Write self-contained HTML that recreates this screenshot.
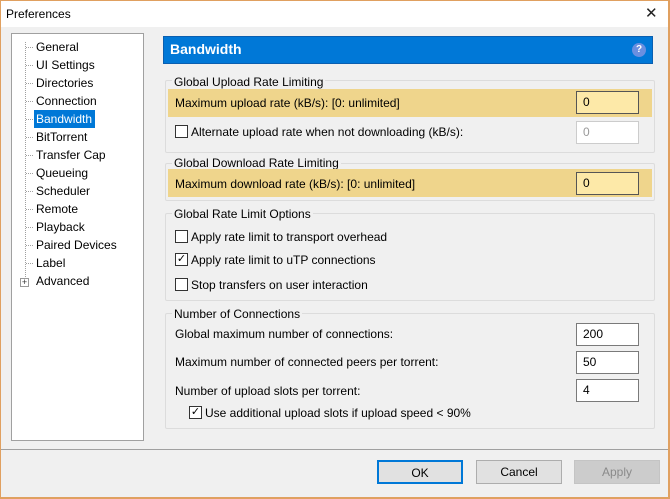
<!DOCTYPE html>
<html><head><meta charset="utf-8"><style>
*{box-sizing:border-box;margin:0;padding:0}
body{width:670px;height:499px;overflow:hidden;background:#f0f0f0;font-family:"Liberation Sans",sans-serif;font-size:12px;color:#000;position:relative}
.a{position:absolute}
.frame{left:0;top:0;width:670px;height:499px;border:1px solid #e0a060;border-width:1px 2px 2px 1px}
.title{left:1px;top:1px;width:667px;height:26px;background:#fff}
.t{position:absolute;white-space:nowrap;line-height:14px}
.tree{left:11px;top:33px;width:133px;height:408px;background:#fff;border:1px solid #a0a0a0}
.grp{position:absolute;border:1px solid #dcdcdc;border-radius:2px}
.inp{position:absolute;width:63px;height:23px;background:#fff;border:1px solid #7a7a7a;padding:3px 0 0 6px;font-size:12px}
.cb{position:absolute;width:13px;height:13px;border:1px solid #333;background:#fff}
.btn{position:absolute;top:460px;height:24px;width:86px;border:1px solid #adadad;background:#e1e1e1;text-align:center;line-height:22px}
.h{position:absolute;left:26px;width:7px;border-top:1px dotted #a0a0a0}
</style></head><body>
<div class="a frame"></div>
<div class="a title"></div>
<div class="t" style="left:6px;top:7px">Preferences</div>
<div class="t" style="left:645px;top:7px;font-size:15px;color:#222;font-weight:300">✕</div>
<div class="a tree">
<div class="a" style="left:13px;top:8px;height:241px;border-left:1px dotted #a0a0a0"></div>
</div>
<div class="h" style="top:47px"></div><div class="h" style="top:65px"></div><div class="h" style="top:83px"></div><div class="h" style="top:101px"></div><div class="h" style="top:119px"></div><div class="h" style="top:137px"></div><div class="h" style="top:155px"></div><div class="h" style="top:173px"></div><div class="h" style="top:191px"></div><div class="h" style="top:209px"></div><div class="h" style="top:227px"></div><div class="h" style="top:245px"></div><div class="h" style="top:263px"></div>
<div class="a" style="left:34px;top:110px;width:61px;height:18px;background:#0078d7"></div>
<div class="t" style="left:36px;top:40px">General</div>
<div class="t" style="left:36px;top:58px">UI Settings</div>
<div class="t" style="left:36px;top:76px">Directories</div>
<div class="t" style="left:36px;top:94px">Connection</div>
<div class="t" style="left:36px;top:112px;color:#fff">Bandwidth</div>
<div class="t" style="left:36px;top:130px">BitTorrent</div>
<div class="t" style="left:36px;top:148px">Transfer Cap</div>
<div class="t" style="left:36px;top:166px">Queueing</div>
<div class="t" style="left:36px;top:184px">Scheduler</div>
<div class="t" style="left:36px;top:202px">Remote</div>
<div class="t" style="left:36px;top:220px">Playback</div>
<div class="t" style="left:36px;top:238px">Paired Devices</div>
<div class="t" style="left:36px;top:256px">Label</div>
<div class="t" style="left:36px;top:274px">Advanced</div>
<div class="a" style="left:20px;top:278px;width:9px;height:9px;border:1px solid #999;background:#fff;font-size:9px;line-height:7px;text-align:center;color:#333">+</div>

<div class="a" style="left:163px;top:36px;width:490px;height:28px;background:#0078d7;border:1px solid #0a5fb0"></div>
<div class="t" style="left:170px;top:42px;color:#fff;font-weight:bold;font-size:14px">Bandwidth</div>
<div class="a" style="left:632px;top:43px;width:14px;height:14px;border-radius:50%;background:#6a8fe0;color:#fff;font-size:10px;font-weight:bold;text-align:center;line-height:14px">?</div>

<div class="grp" style="left:165px;top:80px;width:490px;height:73px"></div>
<div class="t" style="left:172px;top:75px;background:#f0f0f0;padding:0 2px">Global Upload Rate Limiting</div>
<div class="a" style="left:168px;top:89px;width:484px;height:28px;background:#efd58c"></div>
<div class="t" style="left:175px;top:96px">Maximum upload rate (kB/s): [0: unlimited]</div>
<div class="inp" style="left:576px;top:91px;background:#fde9a8;border-color:#555">0</div>
<div class="cb" style="left:175px;top:125px"></div>
<div class="t" style="left:191px;top:125px">Alternate upload rate when not downloading (kB/s):</div>
<div class="inp" style="left:576px;top:121px;border-color:#ccc;color:#999">0</div>

<div class="grp" style="left:165px;top:163px;width:490px;height:38px"></div>
<div class="t" style="left:172px;top:156px;background:#f0f0f0;padding:0 2px">Global Download Rate Limiting</div>
<div class="a" style="left:168px;top:169px;width:484px;height:28px;background:#efd58c"></div>
<div class="t" style="left:175px;top:177px">Maximum download rate (kB/s): [0: unlimited]</div>
<div class="inp" style="left:576px;top:172px;background:#fde9a8;border-color:#555">0</div>

<div class="grp" style="left:165px;top:213px;width:490px;height:88px"></div>
<div class="t" style="left:172px;top:207px;background:#f0f0f0;padding:0 2px">Global Rate Limit Options</div>
<div class="cb" style="left:175px;top:230px"></div>
<div class="t" style="left:191px;top:230px">Apply rate limit to transport overhead</div>
<div class="cb" style="left:175px;top:253px;font-size:11px;line-height:11px;text-align:center">✓</div>
<div class="t" style="left:191px;top:253px">Apply rate limit to uTP connections</div>
<div class="cb" style="left:175px;top:278px"></div>
<div class="t" style="left:191px;top:278px">Stop transfers on user interaction</div>

<div class="grp" style="left:165px;top:313px;width:490px;height:116px"></div>
<div class="t" style="left:172px;top:307px;background:#f0f0f0;padding:0 2px">Number of Connections</div>
<div class="t" style="left:175px;top:327px">Global maximum number of connections:</div>
<div class="inp" style="left:576px;top:323px">200</div>
<div class="t" style="left:175px;top:355px">Maximum number of connected peers per torrent:</div>
<div class="inp" style="left:576px;top:351px">50</div>
<div class="t" style="left:175px;top:384px">Number of upload slots per torrent:</div>
<div class="inp" style="left:576px;top:379px">4</div>
<div class="cb" style="left:189px;top:406px;font-size:11px;line-height:11px;text-align:center">✓</div>
<div class="t" style="left:205px;top:406px">Use additional upload slots if upload speed &lt; 90%</div>

<div class="a" style="left:1px;top:449px;width:667px;border-top:1px solid #a0a0a0"></div>
<div class="btn" style="left:377px;border:2px solid #0078d7">OK</div>
<div class="btn" style="left:476px">Cancel</div>
<div class="btn" style="left:574px;color:#8a8a8a;background:#cccccc;border-color:#c4c4c4">Apply</div>
</body></html>
